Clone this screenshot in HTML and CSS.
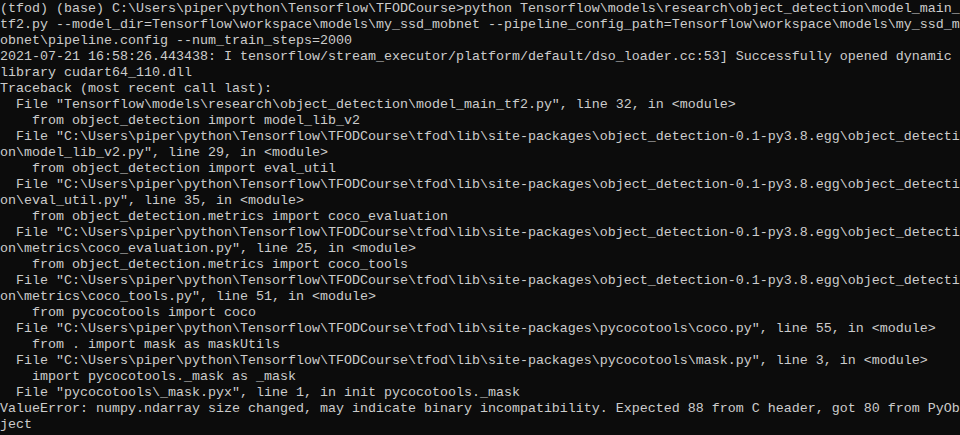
FILE: index.html
```html
<!DOCTYPE html>
<html>
<head>
<meta charset="utf-8">
<link rel="stylesheet" href="styles.css">
</head>
<body>
<pre class="console">(tfod) (base) C:\Users\piper\python\Tensorflow\TFODCourse&gt;python Tensorflow\models\research\object_detection\model_main_
tf2.py --model_dir=Tensorflow\workspace\models\my_ssd_mobnet --pipeline_config_path=Tensorflow\workspace\models\my_ssd_m
obnet\pipeline.config --num_train_steps=2000
2021-07-21 16:58:26.443438: I tensorflow/stream_executor/platform/default/dso_loader.cc:53] Successfully opened dynamic
library cudart64_110.dll
Traceback (most recent call last):
  File "Tensorflow\models\research\object_detection\model_main_tf2.py", line 32, in &lt;module&gt;
    from object_detection import model_lib_v2
  File "C:\Users\piper\python\Tensorflow\TFODCourse\tfod\lib\site-packages\object_detection-0.1-py3.8.egg\object_detecti
on\model_lib_v2.py", line 29, in &lt;module&gt;
    from object_detection import eval_util
  File "C:\Users\piper\python\Tensorflow\TFODCourse\tfod\lib\site-packages\object_detection-0.1-py3.8.egg\object_detecti
on\eval_util.py", line 35, in &lt;module&gt;
    from object_detection.metrics import coco_evaluation
  File "C:\Users\piper\python\Tensorflow\TFODCourse\tfod\lib\site-packages\object_detection-0.1-py3.8.egg\object_detecti
on\metrics\coco_evaluation.py", line 25, in &lt;module&gt;
    from object_detection.metrics import coco_tools
  File "C:\Users\piper\python\Tensorflow\TFODCourse\tfod\lib\site-packages\object_detection-0.1-py3.8.egg\object_detecti
on\metrics\coco_tools.py", line 51, in &lt;module&gt;
    from pycocotools import coco
  File "C:\Users\piper\python\Tensorflow\TFODCourse\tfod\lib\site-packages\pycocotools\coco.py", line 55, in &lt;module&gt;
    from . import mask as maskUtils
  File "C:\Users\piper\python\Tensorflow\TFODCourse\tfod\lib\site-packages\pycocotools\mask.py", line 3, in &lt;module&gt;
    import pycocotools._mask as _mask
  File "pycocotools\_mask.pyx", line 1, in init pycocotools._mask
ValueError: numpy.ndarray size changed, may indicate binary incompatibility. Expected 88 from C header, got 80 from PyOb
ject</pre>
</body>
</html>
```
FILE: styles.css
```css
html, body {
  margin: 0;
  padding: 0;
  background: #0c0c0c;
  height: 100%;
  overflow: hidden;
}
.console {
  margin: 0;
  padding: 1px 0 0 0;
  font-family: "Liberation Mono", monospace;
  font-size: 13.333px;
  line-height: 16px;
  color: #cccccc;
  white-space: pre;
  overflow: hidden;
  width: 960px;
}
```
